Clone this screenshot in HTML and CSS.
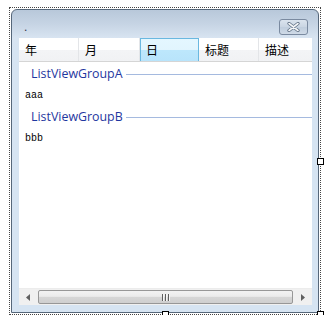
FILE: index.html
```html
<!DOCTYPE html>
<html>
<head>
<meta charset="utf-8">
<link rel="stylesheet" href="styles.css">
</head>
<body>
<div class="selection">
  <div class="form">
    <div class="titlebar">
      <span class="title">.</span>
      <div class="close">
        <svg width="15" height="10" viewBox="0 0 15 10">
          <path d="M3 1.5 L12 8.5 M12 1.5 L3 8.5" stroke="#5e6e82" stroke-width="3.2" stroke-linecap="round"/>
          <path d="M3 1.5 L12 8.5 M12 1.5 L3 8.5" stroke="#f4f6f8" stroke-width="1.6" stroke-linecap="round"/>
        </svg>
      </div>
    </div>
    <div class="client">
      <div class="header">
        <div class="col c1">年</div>
        <div class="col c2">月</div>
        <div class="col c3 sel">日</div>
        <div class="col c4">标题</div>
        <div class="col c5">描述</div>
      </div>
      <div class="body">
        <div class="group"><span class="gname">ListViewGroupA</span><span class="gline"></span></div>
        <div class="item">aaa</div>
        <div class="group"><span class="gname">ListViewGroupB</span><span class="gline"></span></div>
        <div class="item">bbb</div>
      </div>
      <div class="hscroll">
        <div class="arrow">
          <svg width="4" height="7" viewBox="0 0 4 7"><path d="M4 0 L0 3.5 L4 7 Z" fill="#606060"/></svg>
        </div>
        <div class="thumb">
          <span class="grip"></span><span class="grip"></span><span class="grip"></span>
        </div>
        <div class="arrow">
          <svg width="4" height="7" viewBox="0 0 4 7"><path d="M0 0 L4 3.5 L0 7 Z" fill="#606060"/></svg>
        </div>
      </div>
    </div>
  </div>
  <span class="handle h-right"></span>
  <span class="handle h-bottom"></span>
  <span class="handle h-corner"></span>
</div>
</body>
</html>
```
FILE: styles.css
```css
html, body {
  margin: 0;
  padding: 0;
  background: #ffffff;
}
body {
  padding: 7px 0 0 9px;
}
.selection {
  position: relative;
  width: 312px;
  height: 308px;
  box-sizing: border-box;
  border: 1px dotted #444;
  padding: 1px;
}
.form {
  width: 308px;
  height: 304px;
  box-sizing: border-box;
  border: 1px solid #56677a;
  border-radius: 6px 6px 0 0;
  background: linear-gradient(#b8c8da 0px, #c6d4e4 14px, #d8e4f1 28px, #d6e4f2 40px);
  display: flex;
  flex-direction: column;
}
.titlebar {
  height: 28px;
  display: flex;
  align-items: flex-start;
  justify-content: space-between;
  padding: 0 10px 0 12px;
}
.title {
  font: 12px "Liberation Sans", sans-serif;
  color: #334;
  margin-top: 11px;
  line-height: 12px;
}
.close {
  margin-top: 9px;
  width: 29px;
  height: 16px;
  box-sizing: border-box;
  border: 1px solid #7a8aa0;
  border-radius: 3px;
  background: linear-gradient(#dbe4ee, #c9d5e3 50%, #bfcddd 51%, #cfdae7);
  display: flex;
  align-items: center;
  justify-content: center;
}
.close svg { display: block; }
.client {
  flex: 1;
  margin: 0 6px 7px 7px;
  background: #ffffff;
  display: flex;
  flex-direction: column;
}
.header {
  height: 24px;
  display: flex;
  box-sizing: border-box;
  border-bottom: 1px solid #d5d5d5;
  background: linear-gradient(#ffffff 0, #ffffff 50%, #f3f4f6 51%, #f1f2f4 100%);
}
.col {
  box-sizing: border-box;
  border-right: 1px solid #e3e5e8;
  font: 12px "Noto Sans CJK SC", sans-serif;
  color: #000;
  padding: 0 0 0 6px;
  display: flex;
  align-items: center;
  line-height: 12px;
}
.c1 { width: 60px; }
.c2 { width: 61px; }
.c3 { width: 59px; }
.c4 { width: 60px; }
.c5 { flex: 1; border-right: none; }
.col.sel {
  background: linear-gradient(#e4f7ff 0, #e1f5fe 50%, #bde7fc 51%, #b8e4fb 100%);
  border: 1px solid #6ab8e0;
  border-bottom: none;
  padding-left: 5px;
}
.body {
  flex: 1;
  padding-top: 1px;
}
.group {
  height: 22px;
  display: flex;
  align-items: center;
  padding-left: 12px;
}
.gname {
  font: 12.4px "Open Sans", "DejaVu Sans", sans-serif;
  color: #1f37a0;
  line-height: 14px;
}
.gline {
  flex: 1;
  height: 1px;
  background: #a5badf;
  margin-left: 3px;
}
.item {
  height: 21px;
  display: flex;
  align-items: center;
  padding-left: 6px;
  font: 10px "Liberation Mono", monospace;
  color: #000;
}
.hscroll {
  height: 17px;
  display: flex;
  align-items: stretch;
  background: #f0f0f0;
  border-top: 1px solid #ececec;
  box-sizing: border-box;
}
.arrow {
  width: 18px;
  display: flex;
  align-items: center;
  justify-content: center;
}
.thumb {
  flex: 1;
  margin: 1px;
  box-sizing: border-box;
  border: 1px solid #979797;
  border-radius: 2px;
  background: linear-gradient(#f2f2f2 0, #ebebeb 45%, #d6d6d6 50%, #cfcfcf 100%);
  display: flex;
  align-items: center;
  justify-content: center;
  gap: 1px;
}
.grip {
  width: 1px;
  height: 7px;
  background: #5f5f5f;
  box-shadow: 1px 0 0 #f5f5f5;
  margin-right: 1px;
}
.handle {
  position: absolute;
  width: 7px;
  height: 7px;
  box-sizing: border-box;
  border: 1px solid #000;
  background: #fff;
}
.h-right { right: -4px; top: 150px; }
.h-bottom { bottom: -4px; left: 152px; }
.h-corner { right: -4px; bottom: -4px; }
```
